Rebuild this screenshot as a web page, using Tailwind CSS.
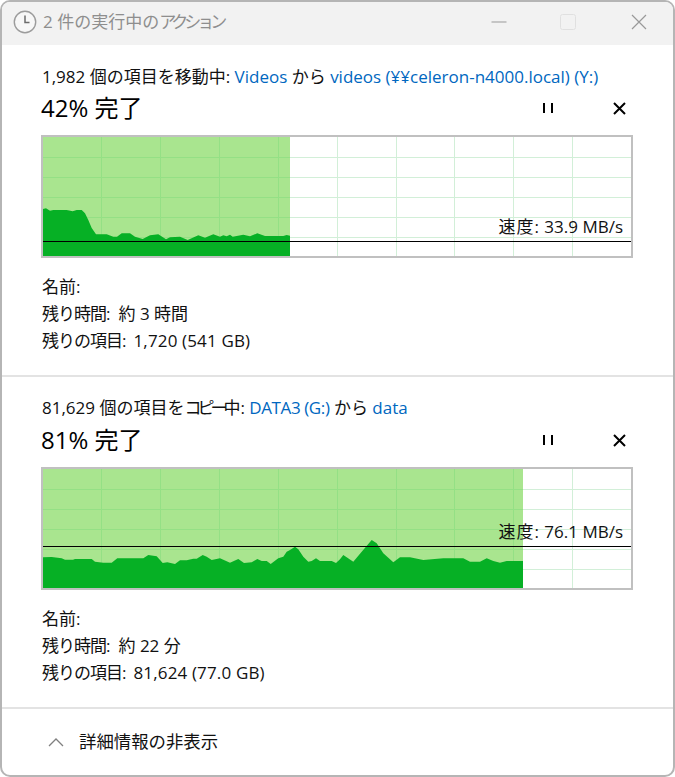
<!DOCTYPE html>
<html lang="ja">
<head>
    <meta charset="UTF-8">
    <meta name="viewport" content="width=device-width, initial-scale=1.0">
    <script src="https://cdn.jsdelivr.net/npm/@tailwindcss/browser@4"></script>
    <title>2 件の実行中のアクション</title>
</head>
<body class="bg-white">
    <div class="flex flex-col h-[777px] w-[675px] overflow-hidden rounded-[10px] border-2 border-[#b5b5b5] bg-white text-[17px] text-[#111] font-['Open_Sans','Noto_Sans_CJK_JP',sans-serif]">
        <!-- title bar -->
        <div class="flex items-center h-[43px] pb-[4px] bg-[#f2f2f2] text-[#8e8e8e] shrink-0">
            <svg class="ml-[11px] w-[24px] h-[24px]" viewBox="0 0 24 24">
                <circle cx="12" cy="12" r="10.7" fill="#f7f7f7" stroke="#9c9c9c" stroke-width="1.4"/>
                <path d="M12 5.5V12.5H16.5" fill="none" stroke="#6b6b6b" stroke-width="1.5"/>
            </svg>
            <span class="ml-[6px] leading-none">2 件の実行中の<span class="tracking-[-4px]">アクション</span></span>
            <div class="ml-auto flex items-center">
                <svg class="w-[16px] h-[16px]" viewBox="0 0 16 16"><path d="M0.5 8H15.5" stroke="#999" stroke-width="1"/></svg>
                <svg class="ml-[53px] w-[16px] h-[16px]" viewBox="0 0 16 16"><rect x="0.5" y="0.5" width="15" height="15" rx="2" fill="#f2f2f2" stroke="#e0e0e0"/></svg>
                <svg class="ml-[55px] mr-[26px] w-[16px] h-[16px]" viewBox="0 0 16 16"><path d="M1 1L15 15M15 1L1 15" stroke="#999" stroke-width="1.2"/></svg>
            </div>
        </div>

        <!-- first operation -->
        <section class="pt-[19px] pb-[21px] border-b-2 border-[#e3e3e3] shrink-0">
            <div class="h-[26px] leading-[26px] pl-[40px] whitespace-nowrap">1,982 個の項目を移動中: <span class="text-[#0067c0]">Videos</span> から <span class="text-[#0067c0]">videos (¥¥celeron-n4000.local) (Y:)</span></div>
            <div class="h-[36px] flex items-center pl-[39px]">
                <span class="text-[24px] leading-none text-black">42% 完了</span>
                <div class="ml-auto flex items-center">
                    <svg class="w-[10px] h-[12px]" viewBox="0 0 10 12"><path d="M1 1V11M9 1V11" stroke="#000" stroke-width="2"/></svg>
                    <svg class="ml-[60px] mr-[47px] w-[13px] h-[13px]" viewBox="0 0 13 13"><path d="M1 1L12 12M12 1L1 12" stroke="#000" stroke-width="2"/></svg>
                </div>
            </div>
            <div class="relative mt-[9px] ml-[39px] w-[592px] h-[123px] border-2 border-[#c0c0c0] bg-white">
                <svg class="block w-[588px] h-[119px]" viewBox="43 137 588 119">
                    <path d="M337.5 137V256M396.5 137V256M454.5 137V256M513.5 137V256M572.5 137V256M290 157.5H631M290 177.5H631M290 197.5H631M290 217.5H631M290 237.5H631" fill="none" stroke="#d2efd8"/>
                    <rect x="43" y="137" width="247" height="119" fill="#a9e58f"/>
                    <path d="M101.5 137V256M160.5 137V256M219.5 137V256M278.5 137V256M43 157.5H290M43 177.5H290M43 197.5H290M43 217.5H290M43 237.5H290" fill="none" stroke="#94e085"/>
                    <path d="M43 209L46 208.3L50 210.7L53.3 210L66.7 210L72.7 211.3L76.7 210L81.7 210L85 213.3L88.3 220L91.7 228L96 234.3L106.7 234.3L113.3 236.7L117 236.7L121.7 233.3L130 233.3L135 236.7L142.7 239L150 235.3L158.3 234.3L166 239.3L170 237.3L180 236.7L187.7 240L198.3 235.3L205 237.7L213.3 234.3L220 236.7L223.3 235.3L226.7 236.3L230 234.7L232.7 236.7L243.3 234.7L250 236.3L257.3 233.3L265 236L283.3 236L286.7 235L290 235.7V256H43Z" fill="#06b025"/>
                    <path d="M43 241.5H631" stroke="#000" stroke-width="1"/>
                </svg>
                <span class="absolute right-[8px] top-[77px] leading-[26px] whitespace-nowrap"><span class="tracking-[1px]">速度:</span> 33.9 MB/s</span>
            </div>
            <div class="mt-[15px] pl-[40px] leading-[27px]">
                <div>名前:</div>
                <div><span class="tracking-[-1px]">残り時間:</span><span class="ml-[9px]">約 3 時間</span></div>
                <div><span class="tracking-[-1px]">残りの項目:</span><span class="ml-[8px] tracking-[0.15px]">1,720 (541 GB)</span></div>
            </div>
        </section>

        <!-- second operation -->
        <section class="pt-[18px] pb-[21px] border-b-2 border-[#e3e3e3] shrink-0">
            <div class="h-[27px] leading-[26px] pl-[40px] whitespace-nowrap">81,629 個の項目を<span class="tracking-[-4px]">コピー</span>中: <span class="text-[#0067c0] tracking-[-0.4px]">DATA3 (G:)</span> から <span class="text-[#0067c0]">data</span></div>
            <div class="h-[36px] flex items-center pl-[39px]">
                <span class="text-[24px] leading-none text-black">81% 完了</span>
                <div class="ml-auto flex items-center">
                    <svg class="w-[10px] h-[12px]" viewBox="0 0 10 12"><path d="M1 1V11M9 1V11" stroke="#000" stroke-width="2"/></svg>
                    <svg class="ml-[60px] mr-[47px] w-[13px] h-[13px]" viewBox="0 0 13 13"><path d="M1 1L12 12M12 1L1 12" stroke="#000" stroke-width="2"/></svg>
                </div>
            </div>
            <div class="relative mt-[9px] ml-[39px] w-[592px] h-[123px] border-2 border-[#c0c0c0] bg-white">
                <svg class="block w-[588px] h-[119px]" viewBox="43 469 588 119">
                    <path d="M572.5 469V588M523 489.5H631M523 509.5H631M523 529.5H631M523 549.5H631M523 569.5H631" fill="none" stroke="#d2efd8"/>
                    <rect x="43" y="469" width="480" height="119" fill="#a9e58f"/>
                    <path d="M101.5 469V588M160.5 469V588M219.5 469V588M278.5 469V588M337.5 469V588M396.5 469V588M454.5 469V588M513.5 469V588M43 489.5H523M43 509.5H523M43 529.5H523M43 549.5H523M43 569.5H523" fill="none" stroke="#94e085"/>
                    <path d="M43 557.3L51.7 557L61.7 558.3L65 559.7L73 559.7L75 559L91.7 559L95 561.7L103.3 562.7L111.7 562.7L117.3 558.3L143.3 558.3L148.3 555L156.7 556.3L162.7 563L167.3 562.3L175 564L180 560.3L186.7 560.3L193.3 558.7L196.7 558.7L202.7 555L206.7 556.7L211.7 560L220 558.3L230 562.7L238.3 559L244 563L251.7 562.3L257.3 559L261.7 561L266.7 561L270.7 564L278.3 558.3L283.3 556.7L286.7 551.7L290 550L295 546.7L298.3 549.3L303.3 556.7L308.3 561.7L311.7 561L316 558.3L320 561L331.7 561L336 563L340 559.3L343.3 555L353.3 561.7L361.7 551.7L371.7 540L376.7 543.3L383.3 553.3L393.3 562.3L400 557.3L410 557.3L423.3 560L443.3 558.3L463.3 558.3L470 561.7L480 561.7L486.7 558.3L493.3 561L500 562.7L506.7 561L523 561V588H43Z" fill="#06b025"/>
                    <path d="M43 546.5H631" stroke="#000" stroke-width="1"/>
                </svg>
                <span class="absolute right-[8px] top-[50px] leading-[26px] whitespace-nowrap"><span class="tracking-[1px]">速度:</span> 76.1 MB/s</span>
            </div>
            <div class="mt-[15px] pl-[40px] leading-[27px]">
                <div>名前:</div>
                <div><span class="tracking-[-1px]">残り時間:</span><span class="ml-[9px]">約 22 分</span></div>
                <div><span class="tracking-[-1px]">残りの項目:</span><span class="ml-[8px] tracking-[0.15px]">81,624 (77.0 GB)</span></div>
            </div>
        </section>

        <!-- footer -->
        <div class="flex flex-1 items-center pl-[46px]">
            <svg class="w-[16px] h-[9px]" viewBox="0 0 16 9"><path d="M1 8L8 1L15 8" fill="none" stroke="#808080" stroke-width="1.3"/></svg>
            <span class="ml-[15px] text-[17.4px] leading-none">詳細情報の非表示</span>
        </div>
    </div>
</body>
</html>
